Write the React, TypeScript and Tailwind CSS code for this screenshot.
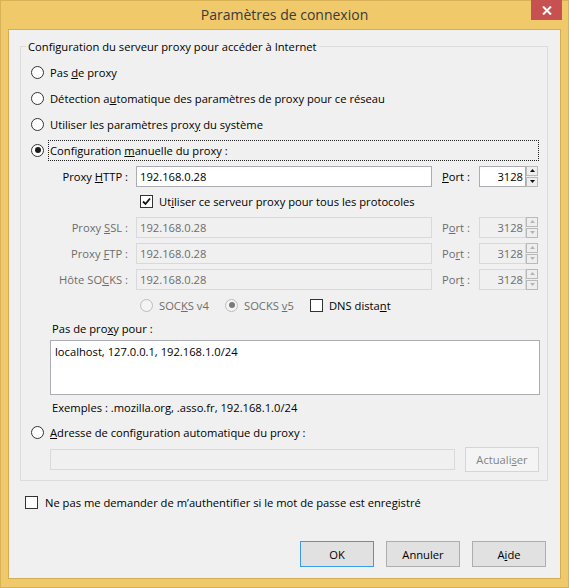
import React from "react";

function Radio({ checked, disabled }: { checked?: boolean; disabled?: boolean }) {
  return (
    <span
      className={`w-[13px] h-[13px] rounded-full border flex items-center justify-center shrink-0 ${
        disabled ? "border-[#bcbcbc] bg-[#f4f4f4]" : "border-[#333333] bg-white"
      }`}
    >
      {checked && (
        <span className={`w-[6px] h-[6px] rounded-full ${disabled ? "bg-[#7a7a7a]" : "bg-[#1a1a1a]"}`} />
      )}
    </span>
  );
}

function Check({ checked }: { checked?: boolean }) {
  return (
    <span className="w-[13px] h-[13px] border border-[#333333] bg-white flex items-center justify-center shrink-0">
      {checked && (
        <svg width="9" height="9" viewBox="0 0 9 9">
          <path d="M1 4.5 L3.5 7 L8 1.5" fill="none" stroke="#111" strokeWidth="1.8" />
        </svg>
      )}
    </span>
  );
}

function Spinner({ disabled }: { disabled?: boolean }) {
  const fill = disabled ? "#b5b5b5" : "#111";
  return (
    <div className="w-[12px] h-[21px] flex flex-col">
      <div className="h-[10px] border border-[#b9b9b9] bg-[#eeeeee] flex items-center justify-center">
        <svg width="5" height="3" viewBox="0 0 5 3">
          <path d="M0 3 L2.5 0 L5 3 Z" fill={fill} />
        </svg>
      </div>
      <div className="h-[10px] mt-[1px] border border-[#b9b9b9] bg-[#eeeeee] flex items-center justify-center">
        <svg width="5" height="3" viewBox="0 0 5 3">
          <path d="M0 0 L5 0 L2.5 3 Z" fill={fill} />
        </svg>
      </div>
    </div>
  );
}

function ProxyRow({
  label,
  port,
  disabled,
}: {
  label: React.ReactNode;
  port: React.ReactNode;
  disabled?: boolean;
}) {
  const text = disabled ? "text-[#6d6d6d]" : "text-black";
  const box = disabled ? "border-[#d9d9d9] bg-[#f0f0f0] text-[#6d6d6d]" : "border-[#abadb3] bg-white text-black";
  return (
    <div className="flex items-center h-[26px]">
      <div className={`w-[107px] text-right ${text}`}>{label}</div>
      <div className={`ml-[8px] w-[296px] h-[21px] border ${box} flex items-center pl-[3px]`}>192.168.0.28</div>
      <div className={`ml-[10px] w-[37px] ${text}`}>{port}</div>
      <div className={`w-[47px] h-[21px] border ${box} flex items-center justify-end pr-[2px]`}>3128</div>
      <Spinner disabled={disabled} />
    </div>
  );
}

export default function App() {
  return (
    <div className="w-[569px] h-[588px] bg-[#f0c96a] border border-[#d9b258] flex flex-col font-['Open_Sans',sans-serif] text-[11.2px] leading-[15px] text-black">
      {/* title bar */}
      <div className="h-[28px] grid grid-cols-[1fr_auto_1fr]">
        <div />
        <div className="self-center -mt-[2px] text-[14px] text-[#3a3a3a]">Paramètres de connexion</div>
        <div className="flex justify-end pr-[6px] -mt-[1px]">
          <div className="w-[31px] h-[20px] bg-[#c75050] flex items-center justify-center">
            <svg width="10" height="9" viewBox="0 0 10 9">
              <path d="M1 0.5 L9 8.5 M9 0.5 L1 8.5" stroke="#fff" strokeWidth="2" />
            </svg>
          </div>
        </div>
      </div>

      {/* client area */}
      <div className="mx-[7px] h-[550px] bg-[#f0f0f0] border border-[#d2ad58] flex flex-col">
        <fieldset className="ml-[11px] mr-[12px] mt-[9px] border border-[#dcdcdc] pb-[8px]">
          <legend className="ml-[5px] px-[2px]">Configuration du serveur proxy pour accéder à Internet</legend>

          <div className="pt-[5px] flex flex-col">
            <div className="h-[26px] flex items-center pl-[10px] gap-[6px]">
              <Radio />
              <span>
                Pas <u>d</u>e proxy
              </span>
            </div>
            <div className="h-[26px] flex items-center pl-[10px] gap-[6px]">
              <Radio />
              <span>
                Détection a<u>u</u>tomatique des paramètres de proxy pour ce réseau
              </span>
            </div>
            <div className="h-[26px] flex items-center pl-[10px] gap-[6px]">
              <Radio />
              <span>
                Utiliser les paramètres prox<u>y</u> du système
              </span>
            </div>
            <div className="h-[26px] flex items-center pl-[10px]">
              <Radio checked />
              <div className="ml-[4px] mr-[8px] flex-1 h-[21px] border border-dotted border-[#222] flex items-center pl-[1px]">
                <span>
                  Configuration <u>m</u>anuelle du proxy :
                </span>
              </div>
            </div>

            <ProxyRow
              label={
                <>
                  Proxy <u>H</u>TTP :
                </>
              }
              port={
                <>
                  <u>P</u>ort :
                </>
              }
            />

            <div className="h-[25px] flex items-center pl-[119px] gap-[6px]">
              <Check checked />
              <span>
                Ut<u>i</u>liser ce serveur proxy pour tous les protocoles
              </span>
            </div>

            <ProxyRow
              disabled
              label={
                <>
                  Proxy <u>S</u>SL :
                </>
              }
              port={
                <>
                  P<u>o</u>rt :
                </>
              }
            />
            <ProxyRow
              disabled
              label={
                <>
                  Proxy <u>F</u>TP :
                </>
              }
              port={
                <>
                  Po<u>r</u>t :
                </>
              }
            />
            <ProxyRow
              disabled
              label={
                <>
                  Hôte SO<u>C</u>KS :
                </>
              }
              port={
                <>
                  Por<u>t</u> :
                </>
              }
            />

            <div className="h-[26px] flex items-center pl-[119px]">
              <div className="w-[85px] flex items-center gap-[6px] text-[#6d6d6d]">
                <Radio disabled />
                <span>
                  SOC<u>K</u>S v4
                </span>
              </div>
              <div className="w-[85px] flex items-center gap-[6px] text-[#6d6d6d]">
                <Radio disabled checked />
                <span>
                  SOCKS <u>v</u>5
                </span>
              </div>
              <div className="flex items-center gap-[6px]">
                <Check />
                <span>
                  DNS dista<u>n</u>t
                </span>
              </div>
            </div>

            <div className="h-[20px] flex items-center pl-[31px]">
              <span>
                Pas de pro<u>x</u>y pour :
              </span>
            </div>
            <div className="mt-[2px] ml-[29px] w-[490px] h-[55px] border border-[#abadb3] bg-white pl-[4px] pt-[3px]">
              localhost, 127.0.0.1, 192.168.1.0/24
            </div>
            <div className="h-[24px] flex items-center pl-[31px]">
              Exemples : .mozilla.org, .asso.fr, 192.168.1.0/24
            </div>

            <div className="h-[26px] flex items-center pl-[10px] gap-[6px]">
              <Radio />
              <span>
                <u>A</u>dresse de configuration automatique du proxy :
              </span>
            </div>
            <div className="mt-[2px] h-[25px] flex items-center pl-[29px]">
              <div className="w-[405px] h-[21px] border border-[#d9d9d9] bg-[#f0f0f0]" />
              <div className="ml-[10px] w-[74px] h-[25px] border border-[#d5d5d5] bg-[#f4f4f4] text-[#838383] flex items-center justify-center">
                <span>
                  Actuali<u>s</u>er
                </span>
              </div>
            </div>
          </div>
        </fieldset>

        <div className="mt-[11px] h-[20px] flex items-center pl-[16px] gap-[7px]">
          <Check />
          <span>
            Ne pas me demander de m’authentifier si le mot de passe est enre<u>g</u>istré
          </span>
        </div>

        <div className="mt-auto mb-[11px] flex justify-end gap-[12px] pr-[14px]">
          <div className="w-[74px] h-[26px] border border-[#3c9be6] bg-[#e1e1e1] flex items-center justify-center">
            OK
          </div>
          <div className="w-[74px] h-[26px] border border-[#adadad] bg-[#e1e1e1] flex items-center justify-center">
            Annuler
          </div>
          <div className="w-[74px] h-[26px] border border-[#adadad] bg-[#e1e1e1] flex items-center justify-center">
            <span>
              A<u>i</u>de
            </span>
          </div>
        </div>
      </div>
    </div>
  );
}
